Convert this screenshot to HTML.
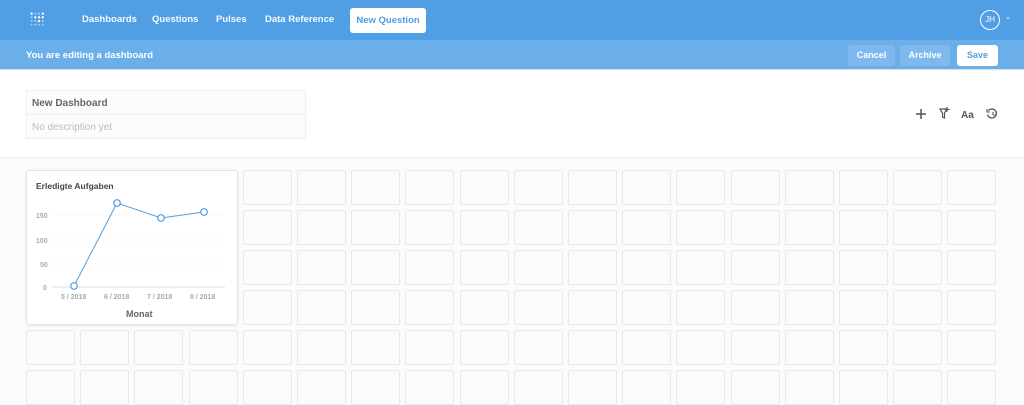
<!DOCTYPE html>
<html><head><meta charset="utf-8"><style>
*{box-sizing:border-box;margin:0;padding:0}
body{width:1024px;height:405px;overflow:hidden;font-family:"Liberation Sans",sans-serif;background:#f9fbfc;position:relative}
.top{position:absolute;left:0;top:0;width:1024px;height:40px;background:#509ee3}
.top a{position:absolute;top:14px;color:#fff;font-size:9.5px;font-weight:bold;opacity:.95}
.nq{position:absolute;left:350px;top:8px;width:76px;height:25px;background:#fff;border-radius:3px;color:#509ee3;font-size:9.5px;font-weight:bold;text-align:center;line-height:25px}
.edit{position:absolute;left:0;top:40px;width:1024px;height:30px;background:#6aaeea;border-bottom:1px solid #dde}
.btn{position:absolute;top:45px;height:21px;border-radius:3px;font-size:9px;font-weight:bold;text-align:center;line-height:21px;color:#fff;background:#7db9ee}
.hdr{position:absolute;left:0;top:71px;width:1024px;height:87px;background:#fff;border-bottom:1px solid #eef0f2}
.box{position:absolute;left:26px;top:90px;width:280px;height:49px;border:1px solid #eee;border-radius:2px;background:#fcfcfc}
.cell{position:absolute;width:49px;height:35px;border:1px solid #e6e8ea;border-radius:2px;background:#f9fbfc}
.card{position:absolute;left:26px;top:170px;width:212px;height:155px;background:#fff;border:1px solid #e2e4e6;border-radius:3px;box-shadow:0 1px 2px rgba(0,0,0,.08)}
</style></head><body>
<div class="top">
<svg style="position:absolute;left:30px;top:12px" width="17" height="16" viewBox="0 0 16 15" fill="#fff">
<g opacity=".45"><circle cx="1.5" cy="1.5" r="1"/><circle cx="1.5" cy="5" r="1"/><circle cx="1.5" cy="8.5" r="1"/><circle cx="1.5" cy="12" r="1"/><circle cx="5" cy="1.5" r="1"/><circle cx="5" cy="8.5" r="1"/><circle cx="5" cy="12" r="1"/><circle cx="8.5" cy="1.5" r="1"/><circle cx="8.5" cy="12" r="1"/><circle cx="12" cy="8.5" r="1"/><circle cx="12" cy="12" r="1"/></g>
<circle cx="1.5" cy="1.5" r="1.1"/><circle cx="5" cy="5" r="1.1"/><circle cx="8.5" cy="8.5" r="1.1"/><circle cx="12" cy="1.5" r="1.1"/><circle cx="12" cy="5" r="1.1"/><circle cx="8.5" cy="5" r="1.1"/></svg>
<a style="left:82px">Dashboards</a><a style="left:152px">Questions</a><a style="left:216px">Pulses</a><a style="left:265px">Data Reference</a>
<div class="nq">New Question</div>
<div style="position:absolute;left:980px;top:10px;width:20px;height:20px;border:1px solid #fff;border-radius:50%;color:#fff;font-size:8px;text-align:center;line-height:18px">JH</div>
<div style="position:absolute;left:1005px;top:13px;color:#fff;font-size:7px">⌄</div>
</div>
<div class="edit"><div style="position:absolute;left:26px;top:10px;color:#fff;font-size:9.5px;font-weight:bold">You are editing a dashboard</div></div>
<div class="btn" style="left:848px;width:47px">Cancel</div>
<div class="btn" style="left:900px;width:50px">Archive</div>
<div class="btn" style="left:957px;width:41px;background:#fff;color:#509ee3">Save</div>
<div class="hdr"></div>
<div class="box"><div style="position:absolute;left:5px;top:7px;font-size:10px;font-weight:bold;color:#666">New Dashboard</div><div style="position:absolute;left:0;top:23px;width:100%;border-top:1px solid #eee"></div><div style="position:absolute;left:5px;top:31px;font-size:10px;color:#bbb">No description yet</div></div>
<svg style="position:absolute;left:914px;top:106px" width="90" height="16" fill="none" stroke="#555" stroke-width="1.5">
<path d="M2 8h10M7 3v10"/>
<path d="M26 3l7 0-2.5 4v5l-2-1v-4z" stroke-width="1.2"/><path d="M33 1v5M30.5 3.5h5" stroke-width="1.1"/>
<text x="47" y="12" fill="#555" stroke="none" font-size="10" font-weight="bold" font-family="Liberation Sans">Aa</text>
<path d="M74.5 4.5a4.5 4.5 0 1 1 -1 4" stroke-width="1.3"/><path d="M73 3v3h3M79 6v2.5l1.5 1.2" stroke-width="1.1"/>
</svg>
<div id="grid"></div>
<div class="card">
<div style="position:absolute;left:9px;top:10px;font-size:8.5px;font-weight:bold;color:#444">Erledigte Aufgaben</div>
<svg style="position:absolute;left:-1px;top:-1px" width="212" height="155" font-family="Liberation Sans" font-size="7" font-weight="bold" fill="#aaa">
<g stroke="#f0f0f0" stroke-dasharray="2,2"><line x1="28" y1="45" x2="200" y2="45"/><line x1="28" y1="70" x2="200" y2="70"/><line x1="28" y1="94" x2="200" y2="94"/></g>
<line x1="26" y1="117" x2="199" y2="117" stroke="#ddd"/>
<text x="10" y="48">150</text><text x="10" y="73">100</text><text x="14" y="97">50</text><text x="17" y="120">0</text>
<text x="35" y="129">5 / 2018</text><text x="78" y="129">6 / 2018</text><text x="121" y="129">7 / 2018</text><text x="164" y="129">8 / 2018</text>
<text x="100" y="147" font-size="9" fill="#666">Monat</text>
<polyline points="48,116 91,33 135,48 178,42" fill="none" stroke="#509ee3" stroke-width="1"/>
<g fill="#fff" stroke="#509ee3" stroke-width="1.2"><circle cx="48" cy="116" r="3.3"/><circle cx="91" cy="33" r="3.3"/><circle cx="135" cy="48" r="3.3"/><circle cx="178" cy="42" r="3.3"/></g>
</svg></div>
<script>
var g=document.getElementById('grid'),h='';
for(var r=0;r<6;r++)for(var c=0;c<18;c++){if(r<4&&c<4)continue;h+='<div class="cell" style="left:'+(26+c*54.2).toFixed(1)+'px;top:'+(170+r*40)+'px"></div>';}
g.innerHTML=h;
</script>
</body></html>
